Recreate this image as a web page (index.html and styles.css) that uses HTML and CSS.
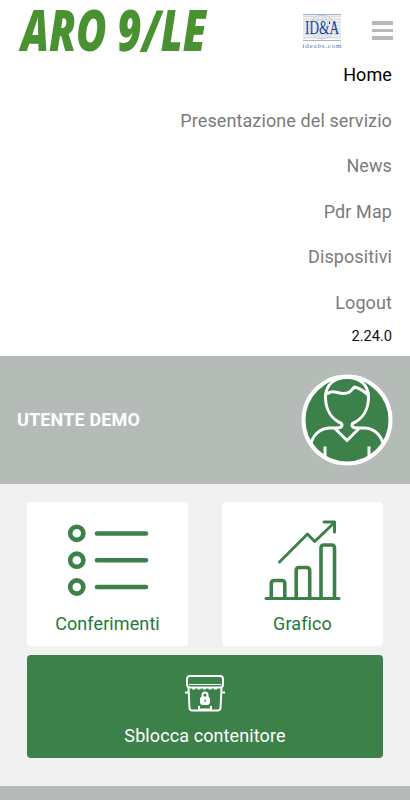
FILE: index.html
```html
<!DOCTYPE html>
<html lang="it">
<head>
    <meta charset="UTF-8">
    <meta name="viewport" content="width=device-width, initial-scale=1.0">
    <title>ARO 9/LE</title>
    <link rel="stylesheet" href="styles.css">
</head>
<body>

<header class="header">
    <div class="topbar">
        <svg class="logo" width="194" height="48" viewBox="0 0 194 48">
            <text x="5" y="43.5" textLength="185" lengthAdjust="spacingAndGlyphs">ARO 9/LE</text>
        </svg>
        <svg class="partner" width="40" height="36" viewBox="0 0 40 36">
            <path d="M1 3.5h38M1 6.5h38M1 9.5h38M1 12.5h38M1 15.5h38M1 18.5h38M1 21.5h38M1 24.5h38" stroke="#dcdcdc" stroke-width="2"/>
            <g fill="none" stroke="#c3c9d2" stroke-width=".8">
                <circle cx="20" cy="14" r="12" fill="#eee"/>
                <ellipse cx="20" cy="14" rx="6" ry="12"/>
                <path d="M20 2v24M10 7h20M10 21h20"/>
            </g>
            <path d="M1 1.5h38M1 27.5h38" stroke="#a3b4dc"/>
            <text class="partner-name" x="3" y="21" textLength="34" lengthAdjust="spacingAndGlyphs">ID&amp;A</text>
            <path d="M27.500 8.500v2.500" stroke="#1746a0" stroke-width="1.200"/>
            <text class="partner-url" x="0.5" y="34.5" textLength="39">ideabs.com</text>
        </svg>
        <button class="toggle" aria-label="Menu">
            <span></span>
            <span></span>
            <span></span>
        </button>
    </div>
    <nav class="menu">
        <a class="active" href="#">Home</a>
        <a href="#">Presentazione del servizio</a>
        <a href="#">News</a>
        <a href="#">Pdr Map</a>
        <a href="#">Dispositivi</a>
        <a href="#">Logout</a>
    </nav>
    <div class="version">2.24.0</div>
</header>

<section class="user">
    <span class="user-name">UTENTE DEMO</span>
    <svg class="avatar" width="92" height="92" viewBox="0 0 92 92">
        <defs>
            <clipPath id="disc"><circle cx="46" cy="46" r="43"/></clipPath>
        </defs>
        <circle cx="46" cy="46" r="43.5" fill="#3d814a"/>
        <g clip-path="url(#disc)" fill="none" stroke="#fff" stroke-width="3" stroke-linejoin="round">
            <path d="M35.500 54Q42.500 54 40.500 49.500C30 45 24.500 35 24.500 23C24.500 11 33 3.500 46 3.500S67.500 11 67.500 23C67.500 35 62 45 51.500 49.500Q49.500 54 56.500 54"/>
            <path d="M26 20C32 15 36 19.500 42 19.500C50 19.500 50 16 53.500 13C58 14 62 16 67 21"/>
            <path d="M36 54H28C18 54.500 11 62 9.500 72M56 54H64C74 54.500 81 62 82.500 72M33.500 54L46 66.500L58.500 54M24 72.500v14M68 72.500v14"/>
        </g>
        <circle cx="46" cy="46" r="43.500" fill="none" stroke="#fff" stroke-width="4"/>
    </svg>
</section>

<main class="tiles">
    <a class="tile" href="#">
        <svg width="84" height="84" viewBox="0 0 84 84" fill="none" stroke="#3d814a">
            <g stroke-width="4.600">
                <circle cx="10.800" cy="16.300" r="6.600"/>
                <circle cx="10.800" cy="43.200" r="6.600"/>
                <circle cx="10.800" cy="70" r="6.600"/>
            </g>
            <path d="M31 16.500H80M31 43.200H80M31 70H80" stroke-width="4.600" stroke-linecap="round"/>
        </svg>
        <span class="tile-label">Conferimenti</span>
    </a>
    <a class="tile" href="#">
        <svg width="84" height="84" viewBox="0 0 84 84" fill="none" stroke="#3d814a" stroke-width="3.600" stroke-linecap="round" stroke-linejoin="round">
            <path d="M5 81.500H78" stroke-width="3"/>
            <path d="M10.300 81V66.500q0-3 3-3h7.500q3 0 3 3V81M35.200 81V53.500q0-3 3-3h7.500q3 0 3 3V81M60 81V31q0-3 3-3h7.500q3 0 3 3V81"/>
            <path d="M18.500 45L46.500 17L53.700 24.500L73 6M63 5H73.500V15" stroke-width="3"/>
        </svg>
        <span class="tile-label">Grafico</span>
    </a>
    <a class="tile wide" href="#">
        <svg width="44" height="40" viewBox="0 0 44 40" fill="none" stroke="#fff" stroke-width="2">
            <rect x="4" y="2" width="36" height="11.500" rx="3"/>
            <path d="M6 10.500H38" stroke-width="1"/>
            <path d="M5.500 14L6.500 34q.2 2.500 3 2.500H34.500q2.800 0 3-2.500L38.500 14"/>
            <path d="M2 18.500h4M38 18.500h4M16 37v-5M28 37v-5M16 35.500h12"/>
            <path d="M9 14.500H36" stroke-dasharray="3 2.500"/>
            <path d="M19.500 24v-3a2.500 2.500 0 0 1 5 0v3"/>
            <rect x="18" y="23.500" width="8" height="6.500" rx="2" fill="#fff"/>
            <path d="M22 25.500v2.500" stroke="#3d814a" stroke-width="1.200"/>
        </svg>
        <span class="tile-label">Sblocca contenitore</span>
    </a>
</main>

<footer class="footer"></footer>

</body>
</html>
```
FILE: styles.css
```css
* {
    box-sizing: border-box;
}
body {
    margin: 0;
    font-family: Roboto, Arial, sans-serif;
    font-size: 18px;
    background-color: #f1f1f1;
    height: 800px;
    overflow: hidden;
}
a {
    text-decoration: none;
}
.header {
    height: 356px;
    padding: 0 17px 0 16px;
    background-color: #fff;
}
.topbar {
    display: flex;
    align-items: center;
    height: 52px;
    padding-top: 9px;
}
.logo,
.partner {
    overflow: visible;
}
.logo text {
    font-family: "Open Sans", sans-serif;
    font-size: 56px;
    font-weight: 800;
    font-style: italic;
    fill: #4a9132;
}
.partner {
    margin-left: 92px;
}
.partner-name {
    font-family: "Liberation Serif", serif;
    font-size: 19px;
    fill: #1746a0;
}
.partner-url {
    font-family: "Liberation Serif", serif;
    font-size: 7px;
    fill: #4e72c4;
}
.toggle {
    display: flex;
    flex-direction: column;
    gap: 4px;
    width: 21px;
    margin-left: auto;
    padding: 0;
    border: none;
    background: none;
}
.toggle span {
    height: 3.5px;
    background-color: #b5bbb7;
}
.menu {
    display: flex;
    flex-direction: column;
    align-items: flex-end;
    padding-right: 1px;
}
.menu a {
    height: 45.5px;
    line-height: 46px;
    color: #7b7b7b;
    letter-spacing: 0.1px;
}
.menu .active {
    color: #000;
}
.version {
    margin-top: 2px;
    padding-right: 1px;
    line-height: 18px;
    font-size: 14.6px;
    text-align: right;
    color: #111;
}
.user {
    display: flex;
    align-items: center;
    justify-content: space-between;
    height: 127.5px;
    padding: 0 17px;
    background-color: #b5bbb7;
}
.user-name {
    font-weight: 700;
    letter-spacing: 0.15px;
    color: #fff;
}
.tiles {
    display: grid;
    grid-template-columns: 161px 161px;
    grid-template-rows: 144px 103.5px;
    justify-content: space-between;
    row-gap: 9px;
    height: 302.5px;
    padding: 18px 27px 0;
}
.tile {
    display: flex;
    flex-direction: column;
    align-items: center;
    padding-top: 15px;
    border-radius: 4px;
    background-color: #fff;
    color: #1d7a31;
}
.tile-label {
    margin-top: 11px;
    line-height: 24px;
    letter-spacing: 0.1px;
}
.wide {
    grid-column: span 2;
    padding-top: 19px;
    background-color: #3d814a;
    color: #fff;
}
.wide .tile-label {
    margin-top: 10px;
}
.footer {
    height: 14px;
    background-color: #b5bbb7;
}
```
